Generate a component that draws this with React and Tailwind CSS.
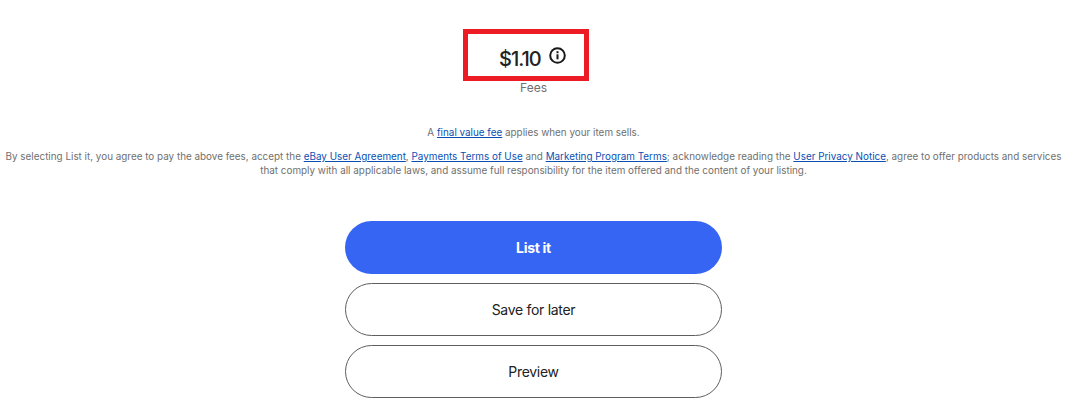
import React from "react";

const L = ({ children }) => (
  <a href="#" className="text-[#0b4fb3] underline">{children}</a>
);

function Btn({ children, primary }) {
  return (
    <button
      className={
        "h-[53px] w-[377px] rounded-[27px] pb-[1px] text-[14px] tracking-[-0.3px] " +
        (primary
          ? "bg-[#3665f3] font-bold text-white"
          : "border border-[#5e5e5e] bg-white font-normal text-[#222222]")
      }
    >
      {children}
    </button>
  );
}

export default function App() {
  return (
    <div className="h-[406px] w-[1074px] overflow-hidden bg-white font-['Inter',sans-serif]">
      <div className="flex w-[1067px] flex-col items-center">
        <div className="mr-[15px] mt-[29px] flex h-[52px] w-[126px] items-start border-[5px] border-[#ed1c24] pl-[31px]">
          <span className="mt-[10px] text-[20px] font-medium leading-[30px] tracking-[-1px] text-[#222222]">$1.10</span>
          <svg className="ml-[8px] mt-[13px]" width="17" height="17" viewBox="0 0 17 17" fill="none">
            <circle cx="8.5" cy="8.5" r="7.3" stroke="#191919" strokeWidth="2" />
            <rect x="7.5" y="7.3" width="2" height="5" fill="#191919" />
            <rect x="7.5" y="4.2" width="2" height="2" fill="#191919" />
          </svg>
        </div>
        <p className="mt-[-1px] text-[12px] leading-[16px] text-[#707070]">Fees</p>
        <p className="mt-[29px] text-[9.9px] leading-[14px] text-[#707070]">
          A <L>final value fee</L> applies when your item sells.
        </p>
        <p className="mt-[10px] w-[1062px] text-center text-[9.9px] leading-[14px] text-[#707070]">
          By selecting List it, you agree to pay the above fees, accept the <L>eBay User Agreement</L>, <L>Payments Terms of Use</L> and <L>Marketing Program Terms</L>; acknowledge reading the <L>User Privacy Notice</L>, agree to offer products and services that comply with all applicable laws, and assume full responsibility for the item offered and the content of your listing.
        </p>
        <div className="mt-[44px] flex flex-col gap-[9px]">
          <Btn primary>List it</Btn>
          <Btn>Save for later</Btn>
          <Btn>Preview</Btn>
        </div>
      </div>
    </div>
  );
}
